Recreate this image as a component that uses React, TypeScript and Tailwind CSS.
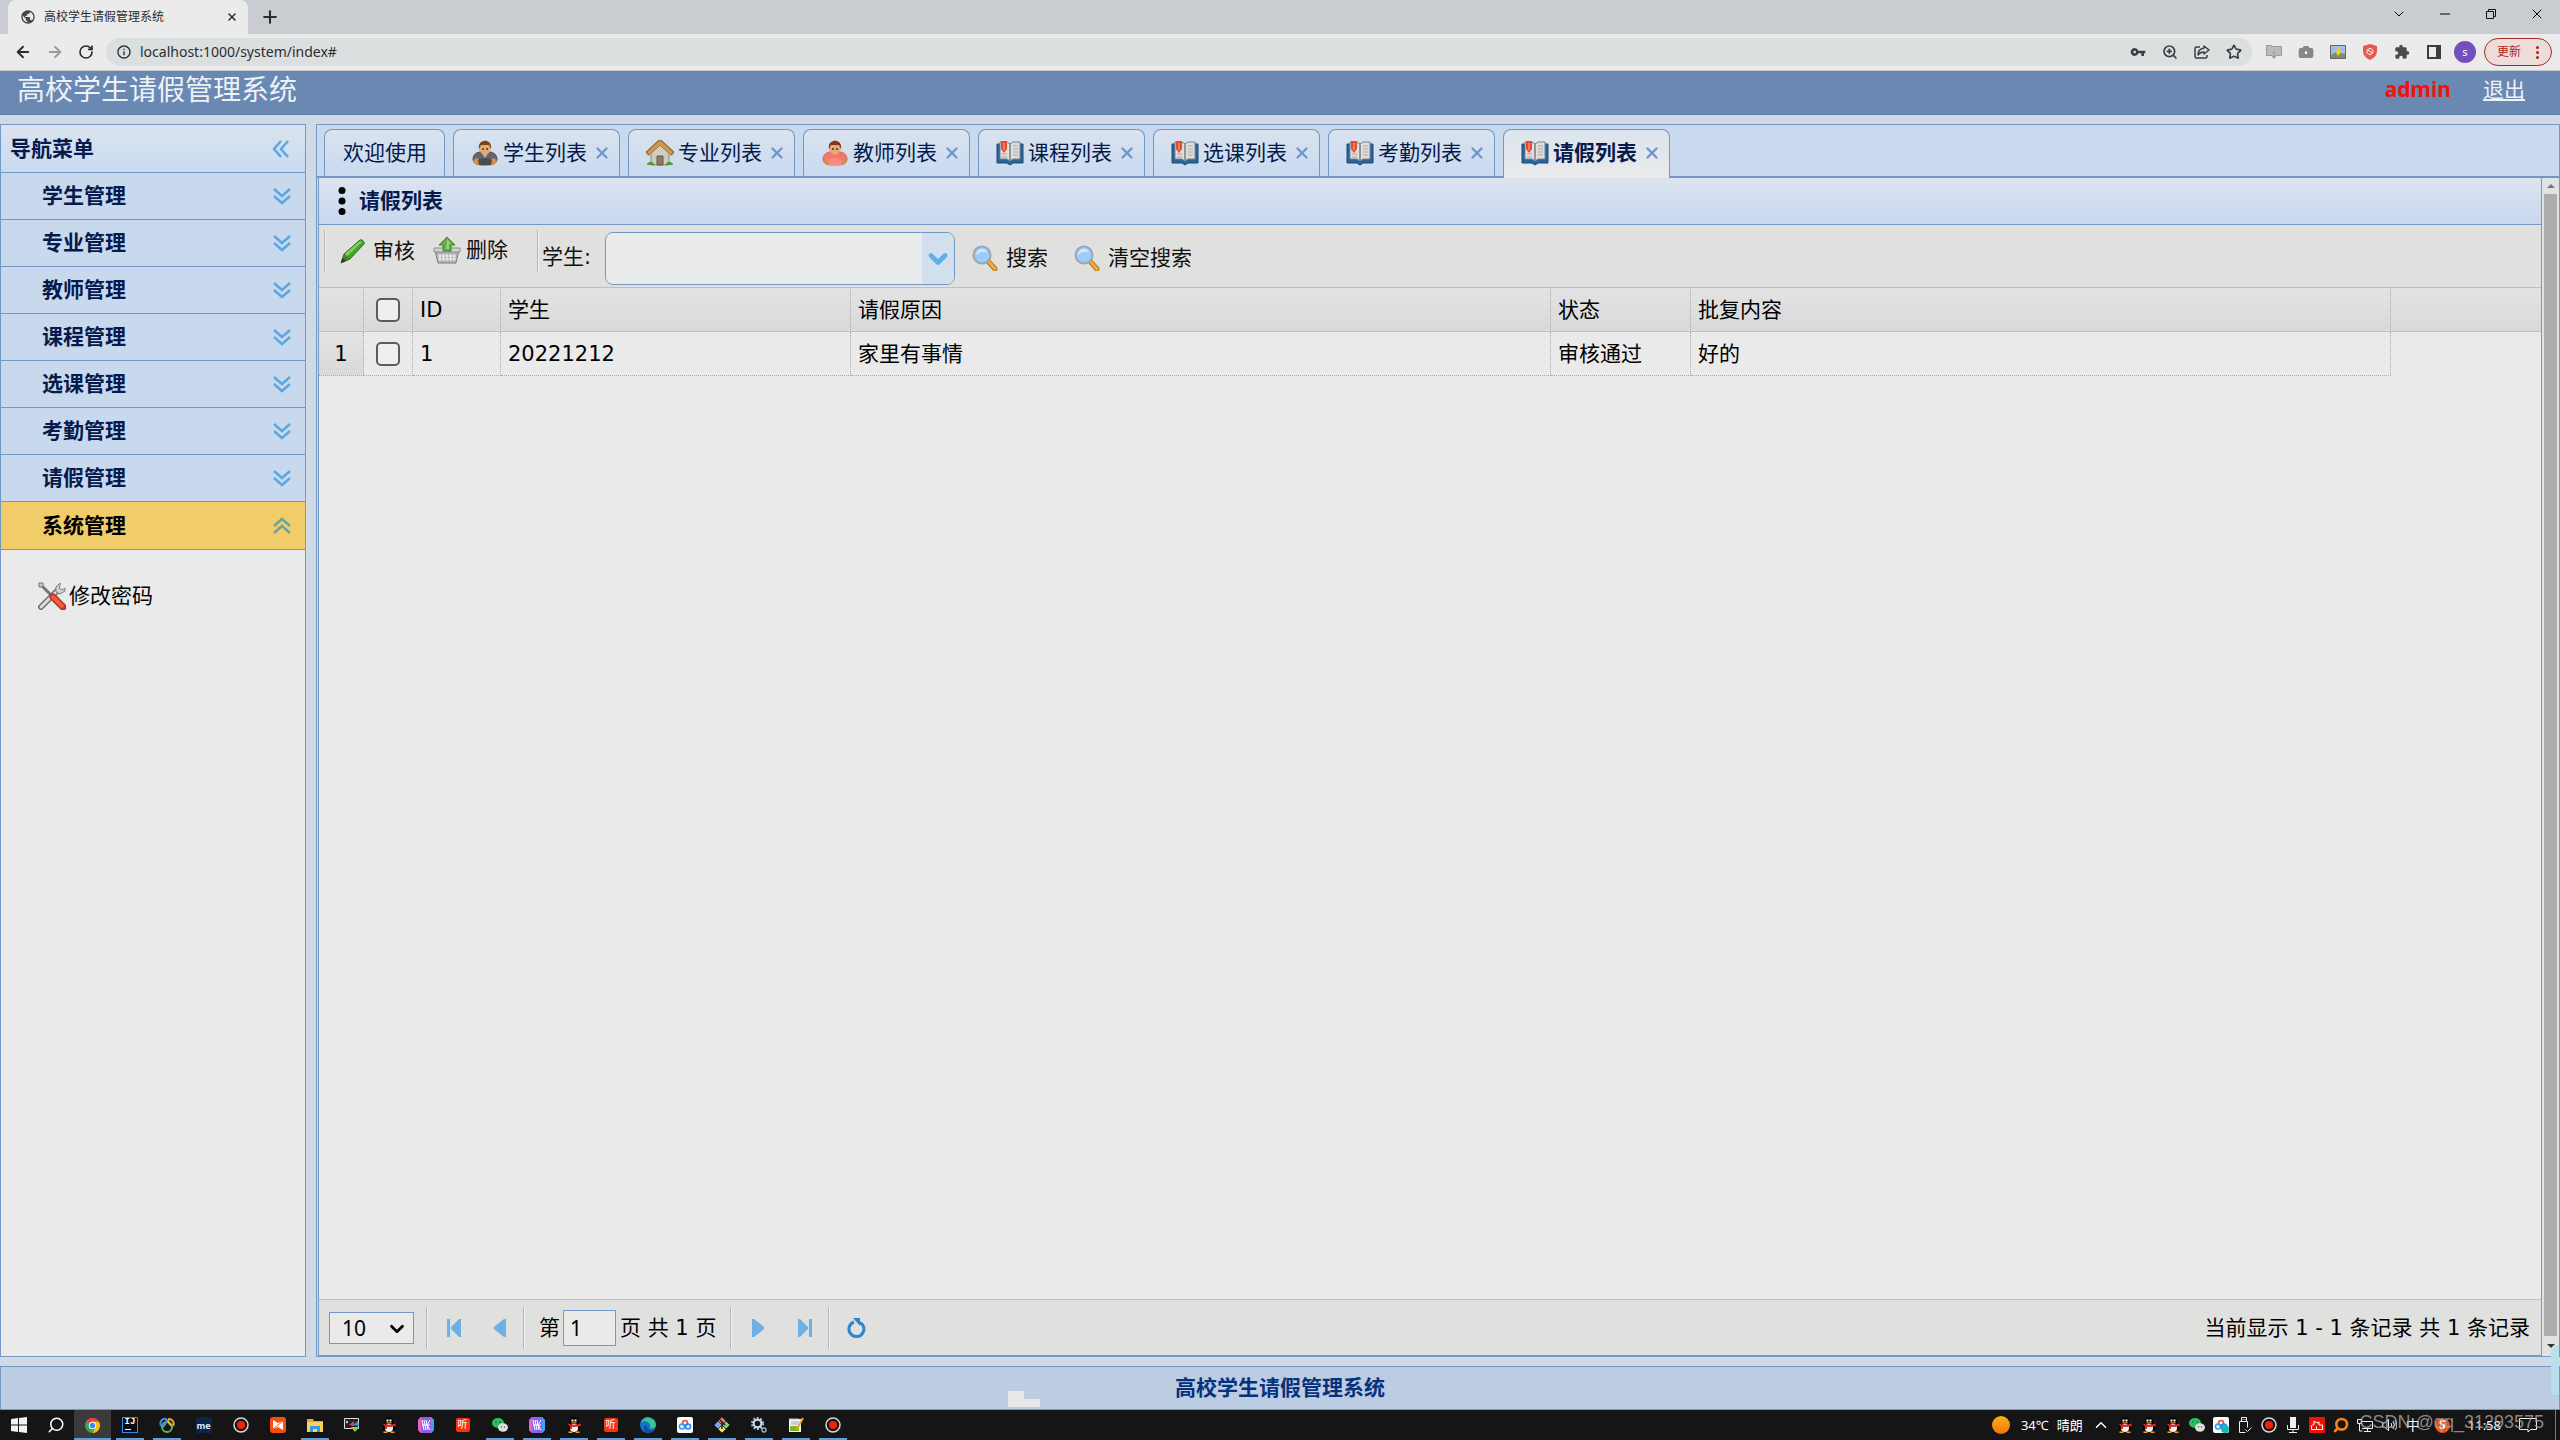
import type { ReactNode } from "react";
import {
    ArrowLeft,
    ArrowRight,
    Camera,
    ChevronDown,
    ChevronUp,
    Minus,
    Plus,
    RotateCw,
    Search,
    Star,
    X,
    ZoomIn,
} from "lucide-react";
import { MdExtension, MdVpnKey, MdInfoOutline, MdPublic } from "react-icons/md";

type IconProps = { className?: string };

const menus = [
    "学生管理",
    "专业管理",
    "教师管理",
    "课程管理",
    "选课管理",
    "考勤管理",
    "请假管理",
];

/* ---------- page icons ---------- */

const DoubleChevron = ({ className }: IconProps) => (
    <svg viewBox="0 0 18 18" className={`h-[18px] w-[18px] ${className}`} fill="none" stroke="currentColor" strokeWidth="2.500">
        <path d="M1 2l8 7 8-7M1 9l8 7 8-7" />
    </svg>
);

const PersonIcon = ({ suit }: { suit: boolean }) => (
    <svg viewBox="0 0 26 26" className="h-[26px] w-[26px]">
        <path
            d="M1 20c0-5 3-8 8-8h8c5 0 8 3 8 8-1 4-4 5-12 5S2 24 1 20z"
            fill={suit ? "#66666a" : "#f4766e"}
            stroke={suit ? "#46464a" : "#dd5a52"}
        />
        <path d="M1 20l4-2 4 4-2 3q-5 0-6-5zM25 20l-4-2-4 4 2 3q5 0 6-5z" fill="#d98f4a" />
        <path d="M6 20q7-4 14 0l-1 5H7z" fill={suit ? "#4c4c50" : "#f88a82"} />
        {suit && <path d="M9 12l4 6 4-6z" fill="#b9b7b4" />}
        {!suit && <path d="M9 12q4 5 8 0z" fill="#eec08c" />}
        <ellipse cx="13" cy="8" rx="6" ry="6.500" fill="#e3aa72" />
        <path d="M7 9C5-2 21-2 19 9l-2-4H9z" fill={suit ? "#7b431b" : "#83331f"} />
        <path d="M10 9h2M14 9h2" stroke="#5b3417" strokeWidth="1.500" />
    </svg>
);

const HouseIcon = () => (
    <svg viewBox="0 0 28 26" className="h-[26px] w-7">
        <path d="M5 13l9-8 9 8v12H5z" fill="#cfccc2" stroke="#8b887e" />
        <path d="M11 16h6v9h-6z" fill="#8c7a66" stroke="#6b5a48" />
        <path d="M1 14L14 2l13 12" fill="none" stroke="#8e6429" strokeWidth="5" />
        <path d="M2 13.500L14 2.500l12 11" fill="none" stroke="#cf9a4c" strokeWidth="3.500" />
        <path d="M1 24q4-5 8 1H1zM27 24q-4-5-8 1h8z" fill="#4d9c3b" />
    </svg>
);

const BookIcon = () => (
    <svg viewBox="0 0 28 26" className="h-[26px] w-7">
        <path d="M1 4h26v19H17l-3 2-3-2H1z" fill="#2a6598" stroke="#1c4a75" />
        <path d="M4 2h7l3 2 3-2h7v17h-7l-3 2-3-2H4z" fill="#dfdedb" stroke="#6f8496" />
        <path d="M14 4v16" stroke="#8f959b" strokeWidth="2" />
        <path d="M17 6h5M17 9h5M17 12h5M17 15h5M6 14h5M6 17h5" stroke="#aaa7a2" />
        <path d="M5 1h6v8l-3 4-3-4z" fill="#ea4630" />
        <path d="M7.500 3h1v7h-1z" fill="#f8b0a4" />
    </svg>
);

const PencilIcon = () => (
    <svg viewBox="0 0 26 26" className="h-[26px] w-[26px]">
        <path d="M1 25l3-9L20 2c2-1 5 2 4 4L10 21z" fill="#3fa52d" stroke="#25721a" />
        <path d="M5 16L20 3l2 1L7 18z" fill="#84d267" />
        <path d="M4 16l6 5-7 3-1-2z" fill="#4b7c37" />
        <path d="M1 25l1.500-5L6 23z" fill="#223f1a" />
    </svg>
);

const BasketIcon = () => (
    <svg viewBox="0 0 28 28" className="h-7 w-7">
        <path d="M2 14h24l-3 13H5z" fill="#b4b4b4" stroke="#7d7d7d" />
        <path d="M1 12h26v4H1z" fill="#d2d2d2" stroke="#8d8d8d" />
        <path d="M7 18v7M10.500 18v7M14 18v7M17.500 18v7M21 18v7M5 20h18M5 23h18" stroke="#f4f4f4" />
        <path d="M14 1l8 8h-4v6h-8V9H6z" fill="#62ac4c" stroke="#3e8530" />
        <path d="M14 3l4 5h-2v5h-3z" fill="#95d17e" />
    </svg>
);

const MagnifierIcon = () => (
    <svg viewBox="0 0 26 26" className="h-[26px] w-[26px]">
        <path d="M15 15l8 9" stroke="#b5761d" strokeWidth="5" strokeLinecap="round" />
        <path d="M17 17l6 7" stroke="#f3a93a" strokeWidth="3" strokeLinecap="round" />
        <circle cx="10" cy="10" r="8.500" fill="#9ccdf6" stroke="#9aa6b8" strokeWidth="2" />
        <path d="M4 10c0-7 9-8 11-3-4-1-8 0-11 3z" fill="#d3eafe" />
    </svg>
);

const ToolsIcon = () => (
    <svg viewBox="0 0 28 28" className="h-7 w-7">
        <path d="M3 25L19 9" stroke="#6f6f6f" strokeWidth="6" strokeLinecap="round" />
        <path d="M3 25L19 9" stroke="#dedede" strokeWidth="3" strokeLinecap="round" />
        <path d="M22 1l-4 4v5l4 2 5-3v-3l-3 2-3-2 1-3z" fill="#d4d4d4" stroke="#7b7b7b" />
        <path d="M2 2l12 12" stroke="#777" strokeWidth="3" />
        <path d="M1 1h4v4H1z" fill="#ccc" stroke="#777" />
        <path d="M15 15l10 10" stroke="#b93222" strokeWidth="7" strokeLinecap="round" />
        <path d="M15 15l9 9" stroke="#ee5c46" strokeWidth="4" strokeLinecap="round" />
    </svg>
);

/* ---------- taskbar icons ---------- */

const WindowsIcon = () => (
    <svg viewBox="0 0 16 16" className="h-4 w-4" fill="#f2f2f2">
        <path d="M0 2l7-1v6.500H0zM8 1l8-1v7.500H8zM0 8.500h7V15l-7-1zM8 8.500h8V16l-8-1z" />
    </svg>
);

const ChromeIcon = () => (
    <svg viewBox="0 0 16 16" className="h-[15px] w-[15px]">
        <circle cx="8" cy="8" r="8" fill="#34a853" />
        <path d="M8 8L1.100 4A8 8 0 0 1 14.900 4z" fill="#ea4335" />
        <path d="M8 4h6.900A8 8 0 0 1 8 16l3.500-6z" fill="#fbbc05" />
        <circle cx="8" cy="8" r="4" fill="#fff" />
        <circle cx="8" cy="8" r="3" fill="#4285f4" />
    </svg>
);

const IdeaIcon = () => (
    <span className="flex h-4 w-4 flex-col justify-between border border-[#3a8be8] bg-[#0c0c10] px-0.5 pb-0.5 font-['Liberation_Mono',monospace] text-[9px] leading-[9px] font-bold text-white">
        IJ
        <span className="h-px w-1.5 bg-white" />
    </span>
);

const NavicatIcon = () => (
    <svg viewBox="0 0 16 16" className="h-4 w-4" fill="none" strokeWidth="2">
        <circle cx="8" cy="10" r="5" stroke="#5bb947" />
        <path d="M2 9C0 4 4 1 7 2c1 2 0 5-3 8" stroke="#3c8fe8" />
        <path d="M14 9c2-4-1-7-4-7-2 2 0 5 3 7" stroke="#f0a52f" />
    </svg>
);

const RecordIcon = () => (
    <svg viewBox="0 0 16 16" className="h-4 w-4">
        <circle cx="8" cy="8" r="7" fill="#181010" stroke="#d8d8d8" strokeWidth="1.500" />
        <circle cx="8" cy="8" r="4" fill="#f0220f" />
    </svg>
);

const OrangeIcon = () => (
    <svg viewBox="0 0 16 16" className="h-4 w-4">
        <rect width="16" height="16" rx="3" fill="#f94d0d" />
        <path d="M3 3l5 3 5-2v9l-5-3-5 2z" fill="#fff" />
        <path d="M3 12l10-8" stroke="#f94d0d" />
    </svg>
);

const FolderIcon = () => (
    <svg viewBox="0 0 16 16" className="h-4 w-4">
        <path d="M0 2h6l1 2h9v11H0z" fill="#e8a92e" />
        <path d="M0 5h16v10H0z" fill="#fbd15c" />
        <path d="M3 15V9h10v6h-3v-3H6v3z" fill="#3c9be0" />
    </svg>
);

const TerminalIcon = () => (
    <svg viewBox="0 0 16 16" className="h-4 w-4">
        <path d="M.5 1.500h14v10H.5z" fill="#222" stroke="#ddd" />
        <path d="M2 4l2 1-2 1" stroke="#eee" fill="none" />
        <path d="M5 8l5-4v5z" fill="#e6463a" />
        <path d="M9 8l5-4 1 5z" fill="#3e8ee6" />
        <path d="M7 10h8l-4 5z" fill="#8ccf3c" />
    </svg>
);

const QQIcon = () => (
    <svg viewBox="0 0 16 16" className="h-4 w-4">
        <ellipse cx="8" cy="10" rx="6.500" ry="5" fill="#050505" />
        <ellipse cx="8" cy="4.500" rx="4.200" ry="4.500" fill="#050505" />
        <ellipse cx="8" cy="11" rx="4" ry="4" fill="#f6f6f6" />
        <path d="M2.500 14.500h4V16h-4zM9.500 14.500h4V16h-4z" fill="#eda21f" />
        <path d="M1.500 6.500q6.500 2.500 13 0l.5 2q-4 2-9 1.500V12H4V9.500z" fill="#e8281c" />
        <path d="M5.500 2.500h2v2h-2zM8.500 2.500h2v2h-2z" fill="#fff" />
        <path d="M5.500 5.300h5v1.200h-5z" fill="#f5a31a" />
    </svg>
);

const StripesIcon = () => (
    <svg viewBox="0 0 16 16" className="h-4 w-4">
        <path d="M3 0h10l3 3v10l-3 3H3l-3-3V3z" fill="#8a62ee" />
        <path d="M0 3l3-3v16l-3-3z" fill="#e862c0" />
        <path d="M13 0l3 3v10l-3 3z" fill="#3fa2f5" />
        <path d="M4 3l2 10M6 3l2 10M8 3l2 10M12 3L9 8l3 5M4 8h8" stroke="#fff" fill="none" />
    </svg>
);

const ListenIcon = () => (
    <span className="flex h-3.5 w-3.5 items-center justify-center rounded-xs bg-[#fa3410] text-[10px] leading-none text-white">
        听
    </span>
);

const WechatIcon = () => (
    <svg viewBox="0 0 16 16" className="h-4 w-4">
        <ellipse cx="6" cy="6" rx="6" ry="5" fill="#2dbd5e" />
        <ellipse cx="11" cy="10.500" rx="5" ry="4.200" fill="#d9e3dc" />
        <circle cx="4" cy="5" r=".8" fill="#135a2c" />
        <circle cx="8" cy="5" r=".8" fill="#135a2c" />
        <circle cx="9.500" cy="10" r=".7" fill="#555" />
        <circle cx="12.500" cy="10" r=".7" fill="#555" />
    </svg>
);

const EdgeIcon = () => (
    <svg viewBox="0 0 16 16" className="h-4 w-4">
        <circle cx="8" cy="8" r="8" fill="#1673c9" />
        <path d="M1 5a8 8 0 0 1 15 3c0 3-4 4-6 3 2-5-4-8-9-6z" fill="#3cc48f" />
        <path d="M1 5a8 8 0 0 1 9-4.700C6 1 3 3 1 7z" fill="#33a8dd" />
        <path d="M7 8c-1 4 3 6 7 5-2 3-8 4-10 0-1-3 1-5 3-5z" fill="#0f4d96" />
    </svg>
);

const BaiduDiskIcon = () => (
    <svg viewBox="0 0 16 16" className="h-4 w-4" fill="none" strokeWidth="1.500">
        <rect width="16" height="16" rx="2" fill="#f8fafc" />
        <circle cx="8" cy="6" r="2.500" stroke="#e84a50" />
        <circle cx="5" cy="9.500" r="2.500" stroke="#2f9cf0" />
        <circle cx="11" cy="9.500" r="2.500" stroke="#2f7ff0" />
    </svg>
);

const GitIcon = () => (
    <svg viewBox="0 0 16 16" className="h-4 w-4" stroke="#151515" strokeWidth=".6">
        <path d="M8 0l4 4-4 4-4-4z" fill="#f07f72" />
        <path d="M4 4l4 4-4 4-4-4z" fill="#7aa5f0" />
        <path d="M12 4l4 4-4 4-4-4z" fill="#83cc62" />
        <path d="M8 8l4 4-4 4-4-4z" fill="#f5dc7a" />
        <path d="M6 3l5 5M8 5v7" stroke="#222" strokeWidth="1.500" />
    </svg>
);

const GearsIcon = () => (
    <svg viewBox="0 0 16 16" className="h-4 w-4" fill="none">
        <circle cx="6.500" cy="6.500" r="5.500" stroke="#a9c5da" strokeWidth="2" strokeDasharray="2 1.500" />
        <circle cx="6.500" cy="6.500" r="3.800" stroke="#c8dbe8" strokeWidth="2" />
        <circle cx="13" cy="13" r="2" stroke="#8fb2cc" strokeWidth="1.500" />
    </svg>
);

const NotepadIcon = () => (
    <svg viewBox="0 0 16 16" className="h-4 w-4">
        <path d="M1 2h12v13H1z" fill="#f5f5ee" />
        <path d="M2 1v2M4 1v2M6 1v2M8 1v2M10 1v2" stroke="#bbb" />
        <path d="M2 9h9v5H2z" fill="#77b52c" />
        <path d="M3 5h8M3 7h7" stroke="#a5a5a5" />
        <path d="M15 1L9 12" stroke="#f0a42b" strokeWidth="2" />
    </svg>
);

const apps: { name: string; icon: ReactNode; open?: boolean; active?: boolean }[] = [
    { name: "开始", icon: <WindowsIcon /> },
    { name: "搜索", icon: <Search className="h-[18px] w-[18px] -scale-x-100 text-white" strokeWidth={2} /> },
    { name: "Chrome", icon: <ChromeIcon />, open: true, active: true },
    { name: "IntelliJ IDEA", icon: <IdeaIcon />, open: true },
    { name: "Navicat", icon: <NavicatIcon />, open: true },
    {
        name: "me",
        icon: (
            <span className="flex h-4 w-4 items-center justify-center bg-[#0b2547] font-['Noto_Sans',sans-serif] text-[9px] leading-none font-bold text-[#dfe8ff]">
                me
            </span>
        ),
    },
    { name: "录屏", icon: <RecordIcon /> },
    { name: "编辑器", icon: <OrangeIcon /> },
    { name: "文件资源管理器", icon: <FolderIcon />, open: true },
    { name: "终端", icon: <TerminalIcon /> },
    { name: "QQ", icon: <QQIcon /> },
    { name: "应用", icon: <StripesIcon /> },
    { name: "听", icon: <ListenIcon /> },
    { name: "微信", icon: <WechatIcon />, open: true },
    { name: "应用", icon: <StripesIcon />, open: true },
    { name: "QQ", icon: <QQIcon />, open: true },
    { name: "听", icon: <ListenIcon />, open: true },
    { name: "Edge", icon: <EdgeIcon />, open: true },
    { name: "网盘", icon: <BaiduDiskIcon />, open: true },
    { name: "Git", icon: <GitIcon />, open: true },
    { name: "设置", icon: <GearsIcon />, open: true },
    { name: "记事本", icon: <NotepadIcon />, open: true },
    { name: "录屏", icon: <RecordIcon />, open: true },
];

const tray: ReactNode[] = [
    <ChevronUp className="h-[18px] w-[18px]" strokeWidth={2} />,
    <QQIcon />,
    <QQIcon />,
    <QQIcon />,
    <WechatIcon />,
    <span className="relative">
        <BaiduDiskIcon />
        <span className="absolute right-0 bottom-0 h-2 w-2 rounded-full bg-[#18b8b0]" />
    </span>,
    <svg viewBox="0 0 14 16" className="h-4 w-3.5" fill="none" stroke="#eee">
        <path d="M3.500.5h5v4h-5zM1.500 4.500h8v6M1.500 4.500v11h6M5 2v1M7 2v1M7.500 12.500l2 2 4-4" />
    </svg>,
    <RecordIcon />,
    <svg viewBox="0 0 14 16" className="h-4 w-3.5" fill="none" stroke="#eee">
        <path d="M4 0h6v11H4z" fill="#eee" stroke="none" />
        <path d="M1.500 8v4.500h11V8M7 13v2.500M3 15.500h8" />
    </svg>,
    <svg viewBox="0 0 16 16" className="h-4 w-4" fill="none" stroke="#fff">
        <rect width="16" height="16" rx="1" fill="#f0100c" stroke="none" />
        <path d="M2.500 12.500v-4l2.500-1V4l3 2 2-1v3h3.500v4.500zM7.500 12V9.500" />
    </svg>,
    <Search className="h-4 w-4 -scale-x-100 text-[#f5821a]" strokeWidth={4} />,
    <svg viewBox="0 0 16 16" className="h-4 w-4" fill="none" stroke="#eee">
        <path d="M5 4.500h10.500v7H5M7 14.500h7M10.500 12v2M.5 2.500h4v4h-4zM2.500 7v7h3" />
    </svg>,
    <svg viewBox="0 0 16 16" className="h-4 w-4" fill="none" stroke="#eee">
        <path d="M1.500 6h2l4-3.500v11L3.500 10h-2zM10 6q1.500 2 0 4M12 4q3 4 0 8M14 3q4 5 0 10" />
    </svg>,
    <span className="text-[14px]">中</span>,
];

/* ---------- browser chrome ---------- */

const ShareIcon = ({ className }: IconProps) => (
    <svg viewBox="0 0 16 16" className={className} fill="none" stroke="currentColor" strokeWidth="1.500">
        <path d="M6 3H2.500Q1 3 1 4.500v8Q1 14 2.500 14h9q1.500 0 1.500-1.500V11" />
        <path d="M10 2l5 4-5 4V8Q6 8 4 11q0-6 6-7z" strokeLinejoin="round" />
    </svg>
);

const BrowserBar = () => (
    <div className="font-['Noto_Sans','Noto_Sans_CJK_SC',sans-serif] text-[#2b2e31]">
        <div className="flex h-[34px] items-end bg-[#c9cdd1]">
            <div className="ml-2 flex h-[34px] w-60 items-center rounded-t-lg bg-[#ebebeb] pr-2.5 pl-3">
                <MdPublic className="h-4 w-4 text-[#44484c]" />
                <span className="ml-2 flex-1 text-[12px]">高校学生请假管理系统</span>
                <button type="button" aria-label="关闭标签页">
                    <X className="h-3 w-3" strokeWidth={3} />
                </button>
            </div>
            <button type="button" aria-label="新标签页" className="ml-3 self-center">
                <Plus className="h-5 w-5" strokeWidth={2.5} />
            </button>
            <div className="ml-auto flex h-7 items-center self-start text-black">
                <button type="button" aria-label="搜索标签页" className="flex w-[46px] justify-center">
                    <ChevronDown className="h-4 w-4" strokeWidth={1.5} />
                </button>
                <button type="button" aria-label="最小化" className="flex w-[46px] justify-center">
                    <Minus className="h-4 w-4" strokeWidth={1.5} />
                </button>
                <button type="button" aria-label="还原" className="flex w-[46px] justify-center">
                    <svg viewBox="0 0 10 10" className="h-2.5 w-2.5" fill="none" stroke="#111">
                        <path d="M.5 2.500h7v7h-7zM2.500 2V.5h7v7H8" />
                    </svg>
                </button>
                <button type="button" aria-label="关闭" className="flex w-[46px] justify-center">
                    <X className="h-4 w-4" strokeWidth={1.5} />
                </button>
            </div>
        </div>
        <div className="flex h-[37px] items-center gap-4 border-b border-[#c4c8cc] bg-[#ebebeb] pr-2 pl-3.5">
            <button type="button" aria-label="后退">
                <ArrowLeft className="h-[18px] w-[18px]" strokeWidth={2.5} />
            </button>
            <button type="button" aria-label="前进" className="-ml-0.5 text-[#9a9da0]">
                <ArrowRight className="h-[18px] w-[18px]" strokeWidth={2.5} />
            </button>
            <button type="button" aria-label="刷新" className="-ml-0.5">
                <RotateCw className="h-4 w-4" strokeWidth={2.5} />
            </button>
            <div className="-ml-1 flex h-7 flex-1 items-center rounded-full bg-[#dcdfe0] pr-2.5 pl-2.5">
                <MdInfoOutline className="h-4 w-4" />
                <input
                    aria-label="地址"
                    defaultValue="localhost:1000/system/index#"
                    className="ml-2 min-w-0 flex-1 bg-transparent text-[14px] outline-none"
                />
                <div className="flex items-center gap-4 text-[#3b3f42]">
                    <MdVpnKey className="h-4 w-4" />
                    <ZoomIn className="h-4 w-4" strokeWidth={2.5} />
                    <ShareIcon className="h-4 w-4" />
                    <Star className="h-4 w-4" strokeWidth={2.5} />
                </div>
            </div>
            <svg viewBox="0 0 16 16" className="-ml-0.5 h-4 w-4" fill="#b9bcbe" stroke="#999">
                <path d="M.5 1.500h5l1 1h9v9H10l-2 3-2-3H.5z" />
                <path d="M8 7v7M6 12l2 2 2-2" fill="none" />
            </svg>
            <Camera className="h-4 w-4 fill-[#85888a] text-[#85888a] [&>circle]:fill-white" />
            <svg viewBox="0 0 16 14" className="h-3.5 w-4">
                <path d="M.5.5h15v13H.5z" fill="#9cc0dd" stroke="#666" />
                <path d="M1 10l5-3 9 2v4H1z" fill="#7d8d6d" />
                <path d="M7 2h3v4h2l-4 5-3-5h2z" fill="#f2cc20" />
            </svg>
            <svg viewBox="0 0 16 16" className="h-4 w-4">
                <path d="M8 0l7 2v5q0 6-7 9-7-3-7-9V2z" fill="#e9594f" />
                <path d="M8 4.500a3 3 0 1 1-.1 0M6 6l4 3" fill="none" stroke="#fff" />
            </svg>
            <MdExtension className="h-4 w-4 text-[#484c50]" />
            <svg viewBox="0 0 16 16" className="h-4 w-4">
                <path d="M2 2h12v12H2z" fill="none" stroke="#3a3d40" strokeWidth="2" />
                <path d="M10 1h5v14h-5z" fill="#3a3d40" />
            </svg>
            <span className="-ml-1 flex h-[22px] w-[22px] items-center justify-center rounded-full bg-[#7450bf] text-[11px] text-white">
                s
            </span>
            <button
                type="button"
                className="-ml-2 flex h-7 items-center gap-[15px] rounded-full border border-[#a82a20] bg-[#ecdcda] px-3 text-[12px] text-[#b02418]"
            >
                更新
                <span className="flex flex-col gap-0.5">
                    <i className="h-[3px] w-[3px] rounded-full bg-[#b02418]" />
                    <i className="h-[3px] w-[3px] rounded-full bg-[#b02418]" />
                    <i className="h-[3px] w-[3px] rounded-full bg-[#b02418]" />
                </span>
            </button>
        </div>
    </div>
);

/* ---------- page ---------- */

const Sidebar = () => (
    <nav className="flex w-[306px] shrink-0 flex-col border border-[#7398c6] bg-[#eaeaea] font-bold text-[#061a4c]">
        <div className="flex h-12 items-center border-b border-[#7398c6] bg-linear-to-b from-[#dbe4ee] to-[#c9daf0] pr-[15px] pl-[9px]">
            <h2 className="flex-1">导航菜单</h2>
            <button type="button" aria-label="收起" className="text-[#5ba7e2]">
                <DoubleChevron className="rotate-90" />
            </button>
        </div>
        {menus.map((menu) => (
            <button
                key={menu}
                type="button"
                className="flex h-[47px] items-center border-b border-[#7398c6] bg-[#c9d9ed] pr-3.5 pl-[41px] text-left"
            >
                <span className="flex-1">{menu}</span>
                <DoubleChevron className="text-[#5ba7e2]" />
            </button>
        ))}
        <button
            type="button"
            className="flex h-12 items-center border-b border-[#7398c6] bg-[#f0cd69] pr-3.5 pl-[41px] text-left text-black"
        >
            <span className="flex-1">系统管理</span>
            <DoubleChevron className="rotate-180 text-[#6fa39a]" />
        </button>
        <a href="#" className="mt-8 ml-[37px] flex items-center gap-[3px] font-normal text-black">
            <ToolsIcon />
            修改密码
        </a>
    </nav>
);

const tabs: { title: string; icon: ReactNode; selected?: boolean }[] = [
    { title: "学生列表", icon: <PersonIcon suit /> },
    { title: "专业列表", icon: <HouseIcon /> },
    { title: "教师列表", icon: <PersonIcon suit={false} /> },
    { title: "课程列表", icon: <BookIcon /> },
    { title: "选课列表", icon: <BookIcon /> },
    { title: "考勤列表", icon: <BookIcon /> },
    { title: "请假列表", icon: <BookIcon />, selected: true },
];

const TabStrip = () => (
    <div className="flex h-[53px] items-end gap-2 border-b-2 border-[#7398c6] bg-[#c9d9ee] pl-[7px] text-[#061a4c]">
        <button
            type="button"
            className="h-[47px] rounded-t-lg border border-b-0 border-[#7398c6] bg-linear-to-b from-[#dae3ee] to-[#c9daf0] pr-[17px] pl-[18px]"
        >
            欢迎使用
        </button>
        {tabs.map((tab) => (
            <div
                key={tab.title}
                className={`flex w-[167px] items-center rounded-t-lg border border-b-0 border-[#7398c6] bg-linear-to-b pl-[17px] ${
                    tab.selected
                        ? "-mb-0.5 h-[49px] from-[#dbe4ee] to-[#eaeaea] pb-0.5 font-bold"
                        : "h-[47px] from-[#dae3ee] to-[#c9daf0]"
                }`}
            >
                <button type="button" className="flex items-center gap-1">
                    <span className="flex w-7 justify-center">{tab.icon}</span>
                    {tab.title}
                </button>
                <button type="button" aria-label={`关闭${tab.title}`} className="ml-1.5 text-[#6f94cc]">
                    <X className="h-[18px] w-[18px]" strokeWidth={3} />
                </button>
            </div>
        ))}
    </div>
);

const Divider = ({ className }: IconProps) => (
    <span className={`h-[42px] w-0.5 border-r border-l border-r-[#f0f0f0] border-l-[#b5b5b5] ${className}`} />
);

const Toolbar = () => (
    <div className="flex h-[62px] items-start bg-[#e0e0df] pl-[5px] text-[#111]">
        <Divider className="mt-[5px]" />
        <button type="button" className="mt-3 ml-3.5 flex h-7 items-center gap-[7px]">
            <PencilIcon />
            审核
        </button>
        <button type="button" className="mt-[11px] ml-[18px] flex h-7 items-center gap-[5px]">
            <BasketIcon />
            删除
        </button>
        <Divider className="mt-[5px] ml-[29px]" />
        <label htmlFor="student" className="mt-[18px] ml-[3px] w-[63px]">
            学生:
        </label>
        <div className="mt-[7px] flex h-[53px] w-[350px] overflow-hidden rounded-lg border border-[#7398c6] bg-[#eaebeb]">
            <input id="student" className="min-w-0 flex-1 bg-transparent px-2 outline-none" />
            <button type="button" aria-label="展开" className="flex w-8 items-center justify-center bg-[#d2dfec] text-[#5fb0e8]">
                <ChevronDown className="h-7 w-7" strokeWidth={4} />
            </button>
        </div>
        <button type="button" className="mt-[19px] ml-[17px] flex h-7 items-center gap-2">
            <MagnifierIcon />
            搜索
        </button>
        <button type="button" className="mt-[19px] ml-[26px] flex h-7 items-center gap-2">
            <MagnifierIcon />
            清空搜索
        </button>
    </div>
);

const checkbox =
    "block mx-auto h-6 w-6 appearance-none rounded-[5px] border-2 border-[#5c5c5c] bg-[#eee]";
const th = "border-r border-dotted border-[#aaa] pl-[7px] text-left font-normal";
const td = "border-r border-b border-dotted border-[#aaa] pl-[7px]";

const LeaveTable = () => (
    <table className="w-full table-fixed border-separate border-spacing-0 text-black">
        <colgroup>
            <col className="w-[45px]" />
            <col className="w-[49px]" />
            <col className="w-[88px]" />
            <col className="w-[350px]" />
            <col className="w-[700px]" />
            <col className="w-[140px]" />
            <col className="w-[700px]" />
            <col />
        </colgroup>
        <thead>
            <tr className="h-[45px] bg-linear-to-b from-[#e3e3e3] to-[#d9d9d9] [&>th]:border-y [&>th]:border-y-[#bfbfbf] [&>th]:[border-block-style:solid]">
                <th className={th} aria-label="行号" />
                <th className="border-r border-dotted border-[#aaa]">
                    <input type="checkbox" aria-label="全选" className={checkbox} />
                </th>
                <th className={th}>ID</th>
                <th className={th}>学生</th>
                <th className={th}>请假原因</th>
                <th className={th}>状态</th>
                <th className={th}>批复内容</th>
                <th aria-label="空" />
            </tr>
        </thead>
        <tbody>
            <tr className="h-11">
                <td className="border-r border-b border-dotted border-[#aaa] bg-linear-to-b from-[#e3e3e3] to-[#d9d9d9] text-center">
                    1
                </td>
                <td className="border-r border-b border-dotted border-[#aaa]">
                    <input type="checkbox" aria-label="选择第1行" className={checkbox} />
                </td>
                <td className={td}>1</td>
                <td className={td}>20221212</td>
                <td className={td}>家里有事情</td>
                <td className={td}>审核通过</td>
                <td className={td}>好的</td>
                <td />
            </tr>
        </tbody>
    </table>
);

const pagerButton = "flex w-[47px] justify-center";

const Pager = () => (
    <div className="flex h-14 items-center border-t border-[#bfbfbf] bg-[#e0e0df] pr-[11px] pl-2.5 text-black">
        <div className="relative">
            <select
                aria-label="每页条数"
                className="h-8 w-[85px] appearance-none border border-[#7398c6] bg-[#eaeaea] pl-3 font-['Noto_Sans',sans-serif]"
            >
                <option>10</option>
            </select>
            <ChevronDown className="pointer-events-none absolute top-1.5 right-1.5 h-[22px] w-[22px]" strokeWidth={3} />
        </div>
        <Divider className="ml-3" />
        <button type="button" aria-label="首页" className="ml-0.5 flex w-[47px] justify-center">
            <svg viewBox="0 0 16 18" className="h-[18px] w-4" fill="#6eb0e4">
                <path d="M1 0h3v18H1zM15 0v18h-2L5 10V8l8-8z" />
            </svg>
        </button>
        <button type="button" aria-label="上一页" className="flex w-[46px] justify-center">
            <svg viewBox="0 0 12 18" className="h-[18px] w-3" fill="#6eb0e4">
                <path d="M12 0v18h-2L0 10V8l10-8z" />
            </svg>
        </button>
        <Divider />
        <label htmlFor="page" className="ml-3.5">
            第
        </label>
        <input
            id="page"
            defaultValue="1"
            className="ml-[3px] h-9 w-[53px] border border-[#7398c6] bg-[#eaeaea] pl-1.5 font-['Noto_Sans',sans-serif] outline-none"
        />
        <span className="ml-1">页 共 1 页</span>
        <Divider className="ml-3.5" />
        <button type="button" aria-label="下一页" className="ml-0.5 flex w-[47px] justify-center">
            <svg viewBox="0 0 12 18" className="h-[18px] w-3" fill="#6eb0e4">
                <path d="M0 0v18h2l10-8V8L2 0z" />
            </svg>
        </button>
        <button type="button" aria-label="尾页" className={pagerButton}>
            <svg viewBox="0 0 16 18" className="h-[18px] w-4" fill="#6eb0e4">
                <path d="M12 0h3v18h-3zM1 0v18h2l8-8V8L3 0z" />
            </svg>
        </button>
        <Divider />
        <button type="button" aria-label="刷新" className="ml-0.5 flex w-[47px] justify-center">
            <svg viewBox="0 0 20 20" className="h-5 w-5">
                <path d="M14 4.500a7.500 7.500 0 1 1-6-.5" fill="none" stroke="#2c86cc" strokeWidth="3" />
                <path d="M7 0h7v8z" fill="#2c86cc" />
            </svg>
        </button>
        <span className="ml-auto">当前显示 1 - 1 条记录 共 1 条记录</span>
    </div>
);

const ScrollBar = () => (
    <div className="flex w-[18px] flex-col items-center border-l border-[#7398c6] bg-[#e0e2e4]">
        <div className="flex h-4 items-center">
            <span className="border-x-4 border-b-4 border-x-transparent border-b-[#777]" />
        </div>
        <div className="w-[13px] flex-1 bg-[#adadad]" />
        <div className="flex h-5 items-center">
            <span className="border-x-4 border-t-4 border-x-transparent border-t-[#333]" />
        </div>
    </div>
);

const Taskbar = () => (
    <div className="relative flex h-[30px] bg-[#151515] text-white">
        {apps.map((app, i) => (
            <button
                key={i}
                type="button"
                aria-label={app.name}
                className={`flex w-[37px] flex-col items-center ${app.active ? "bg-[#3a3a3a]" : ""}`}
            >
                <span className="flex flex-1 items-center pt-0.5">{app.icon}</span>
                <span
                    className={`h-0.5 ${app.active ? "w-full" : "w-7"} ${app.open ? "bg-[#5b9fdc]" : ""}`}
                />
            </button>
        ))}
        <div className="ml-auto flex items-center pr-1 font-['Noto_Sans','Noto_Sans_CJK_SC',sans-serif] text-[13px]">
            <span className="h-[18px] w-[18px] rounded-full bg-linear-to-b from-[#f9b117] to-[#f0730c]" />
            <span className="ml-[11px]">34℃</span>
            <span className="mr-1.5 ml-2">晴朗</span>
            {tray.map((item, i) => (
                <span key={i} className="flex w-6 justify-center">
                    {item}
                </span>
            ))}
            <span className="ml-2.5 flex h-[15px] w-[15px] items-center justify-center rounded-full bg-[#f0501c] text-[12px] font-bold">
                S
            </span>
            <span className="ml-[18px]">11:58</span>
            <svg viewBox="0 0 18 16" className="mx-[18px] h-4 w-[18px]" fill="none" stroke="#eee">
                <path d="M.5 1.500h17v11h-6L9 15v-2.500H.5z" />
            </svg>
            <span className="h-[30px] w-px bg-[#777]" />
        </div>
        <span className="absolute top-0 right-4 font-['Liberation_Sans',sans-serif] text-[18px] leading-6 text-[#a8a8a8]/80">
            CSDN @qq_31293575
        </span>
    </div>
);

const App = () => (
    <div className="flex min-h-screen flex-col bg-[#cfdae6] font-['DejaVu_Sans','Noto_Sans_CJK_SC',sans-serif] text-[21px] leading-7">
        <BrowserBar />
        <header className="flex h-[44px] items-start border-b border-[#5d80ae] bg-[#6988b2] pr-[35px] pl-[17px] font-['Noto_Sans','Noto_Sans_CJK_SC',sans-serif]">
            <h1 className="flex-1 text-[28px] leading-9 text-[#eef2f7]">高校学生请假管理系统</h1>
            <span className="mt-1 font-bold text-[#fb0d0d]">admin</span>
            <a href="#" className="mt-1 ml-8 text-[#eef2f7] underline">
                退出
            </a>
        </header>
        <div className="flex flex-1 gap-2.5 py-[9px]">
            <Sidebar />
            <main className="flex min-w-0 flex-1 flex-col border border-[#7398c6] bg-[#c9d9ee]">
                <TabStrip />
                <div className="flex flex-1">
                    <section className="ml-px flex min-w-0 flex-1 flex-col border-b border-l border-[#7398c6] bg-[#eaeaea]">
                        <div className="flex h-[47px] items-center border-b border-[#7398c6] bg-linear-to-b from-[#dbe4ee] to-[#c9d8ee] pl-[19px] font-bold text-[#061a4c]">
                            <svg viewBox="0 0 8 28" className="h-7 w-2" fill="#000">
                                <circle cx="4" cy="3.500" r="3.500" />
                                <circle cx="4" cy="14" r="3.500" />
                                <circle cx="4" cy="24.500" r="3.500" />
                            </svg>
                            <h2 className="ml-[13px]">请假列表</h2>
                        </div>
                        <Toolbar />
                        <div className="flex-1">
                            <LeaveTable />
                        </div>
                        <Pager />
                    </section>
                    <ScrollBar />
                </div>
            </main>
        </div>
        <footer className="relative flex h-11 items-center justify-center border border-[#7398c6] bg-[#bbcce3] font-bold text-[#06317c]">
            高校学生请假管理系统
            <span className="absolute bottom-0.5 left-[1007px] h-4 w-4 bg-[#e6e8ea]" />
            <span className="absolute bottom-0.5 left-[1023px] h-2 w-4 bg-[#e6e8ea]" />
            <span className="absolute right-0 bottom-3.5 h-[50px] w-2 rounded-tl-lg bg-[#b5e2ea]" />
        </footer>
        <Taskbar />
    </div>
);

export default App;
